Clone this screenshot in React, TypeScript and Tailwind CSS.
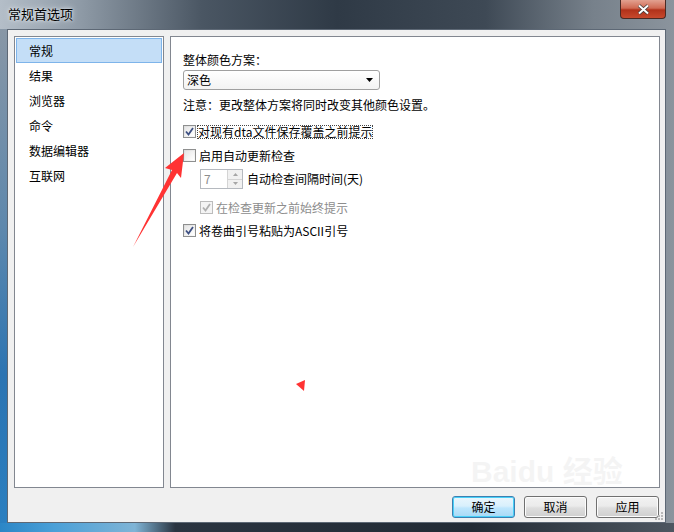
const font = { fontFamily: '"Noto Sans CJK SC", "Microsoft YaHei", sans-serif' }

function Check({ checked, disabled }: { checked?: boolean; disabled?: boolean }) {
	return (
		<span
			className={`size-[13px] shrink-0 border flex items-center justify-center ${disabled ? "border-[#bcbcbc] bg-[#f4f4f4]" : "border-[#8e8f8f] bg-gradient-to-br from-[#dcdcdc] to-[#fbfbfb]"}`}
		>
			<span className={`size-[9px] flex items-center justify-center ${disabled ? "bg-[#f4f4f4]" : "bg-gradient-to-br from-[#e6e6e6] to-[#ffffff]"}`}>
				{checked && (
					<svg width="9" height="9" viewBox="0 0 9 9">
						<path d="M1 4.5 L3.5 7.5 L8 1" fill="none" stroke={disabled ? "#b0b0b0" : "#3d4f82"} strokeWidth="1.8" />
					</svg>
				)}
			</span>
		</span>
	)
}

const nav = ["常规", "结果", "浏览器", "命令", "数据编辑器", "互联网"]

export default function App() {
	return (
		<div style={font} className="relative w-[674px] h-[532px] overflow-hidden flex flex-col text-[12px] text-black bg-[linear-gradient(90deg,#b4bec8_0%,#8e9aa6_12%,#4a5663_30%,#2f3a46_50%,#3e4955_72%,#77818b_88%,#8b949d_100%)]">
			{/* title bar */}
			<div className="h-[29px] shrink-0 flex items-start justify-between pl-[8px] pr-[8px]">
				<span className="mt-[6px] text-[13px] leading-[16px] text-black [text-shadow:0_0_6px_#e8edf2,0_0_3px_#e8edf2]">常规首选项</span>
				<div className="w-[46px] h-[19px] rounded-b-[4px] border border-t-0 border-[#4a2a24] bg-[linear-gradient(#e2a190_0%,#d06a53_45%,#b1321a_55%,#c7492d_100%)] flex items-center justify-center">
					<svg width="13" height="11" viewBox="0 0 13 11">
						<path d="M2 1.5 L11 9.5 M11 1.5 L2 9.5" stroke="#3a3a3a" strokeWidth="3.4" />
						<path d="M2 1.5 L11 9.5 M11 1.5 L2 9.5" stroke="#ffffff" strokeWidth="2" />
					</svg>
				</div>
			</div>

			{/* body */}
			<div className="flex-1 flex">
				<div className="w-[7px] shrink-0 bg-[linear-gradient(#8897a6_0%,#5e88ad_40%,#2c74b2_70%,#2a7fc0_100%)]" />
				<div className="relative w-[659px] h-[494px] border border-[#5d6875] bg-[#f0f0f0] flex flex-col pl-[6px] pr-[5px] pt-[6px]">
					<div className="flex gap-[6px] h-[452px]">
						{/* left list */}
						<div className="w-[150px] h-full border border-[#828790] bg-white p-[1px] flex flex-col">
							{nav.map((n, i) => (
								<div
									key={n}
									className={`h-[25px] pl-[12px] flex items-center leading-none ${i === 0 ? "border border-[#7eb4ea] bg-[#c4def7]" : "border border-transparent"}`}
								>
									{n}
								</div>
							))}
						</div>

						{/* right panel */}
						<div className="relative flex-1 h-full border border-[#828790] bg-white pl-[12px] pt-[15px] flex flex-col">
							<div className="leading-[16px]">整体颜色方案：</div>
							<div className="mt-[2px] w-[197px] h-[20px] rounded-[3px] border border-[#a0a0a0] bg-[linear-gradient(#ffffff,#f3f3f3)] flex items-center justify-between pl-[3px] pr-[6px]">
								<span className="leading-none">深色</span>
								<svg width="7" height="4" viewBox="0 0 7 4">
									<path d="M0 0 H7 L3.5 4 Z" fill="#000" />
								</svg>
							</div>
							<div className="mt-[7px] leading-[16px]">注意：更改整体方案将同时改变其他颜色设置。</div>

							<div className="mt-[10px] flex items-center gap-[1px] h-[17px]">
								<Check checked />
								<span className="leading-[14px] px-[1px] outline-1 outline-dotted outline-[#444] -outline-offset-1">对现有dta文件保存覆盖之前提示</span>
							</div>
							<div className="mt-[7px] flex items-center gap-[3px] h-[17px]">
								<Check />
								<span className="leading-none">启用自动更新检查</span>
							</div>

							<div className="mt-[5px] ml-[17px] flex items-center gap-[4px] h-[20px]">
								<div className="w-[43px] h-[20px] border border-[#b5b9bf] bg-white flex items-center justify-between">
									<span className="pl-[3px] text-[#8d8d8d] leading-none">7</span>
									<div className="w-[15px] h-full flex flex-col border-l border-[#d4d4d4]">
										<div className="flex-1 bg-[#f1f1f1] border-b border-[#d4d4d4] flex items-center justify-center">
											<svg width="5" height="3" viewBox="0 0 5 3"><path d="M0 3 L2.5 0 L5 3 Z" fill="#a6a6a6" /></svg>
										</div>
										<div className="flex-1 bg-[#f1f1f1] flex items-center justify-center">
											<svg width="5" height="3" viewBox="0 0 5 3"><path d="M0 0 L2.5 3 L5 0 Z" fill="#a6a6a6" /></svg>
										</div>
									</div>
								</div>
								<span className="leading-none">自动检查间隔时间(天)</span>
							</div>

							<div className="mt-[10px] ml-[17px] flex items-center gap-[3px] h-[17px] text-[#8d8d8d]">
								<Check checked disabled />
								<span className="leading-none">在检查更新之前始终提示</span>
							</div>
							<div className="mt-[6px] flex items-center gap-[3px] h-[17px]">
								<Check checked />
								<span className="leading-none">将卷曲引号粘贴为ASCII引号</span>
							</div>

							{/* faint watermark */}
							<div className="absolute left-[300px] top-[420px] text-[30px] leading-none font-bold text-black opacity-[0.04] pointer-events-none" style={{ fontFamily: '"Liberation Sans", "Noto Sans CJK SC", sans-serif' }}>Baidu 经验</div>
						</div>
					</div>

					{/* buttons */}
					<div className="mt-[8px] flex justify-end gap-[9px] pr-[1px]">
						<button className="w-[63px] h-[22px] rounded-[3px] border border-[#3c7fb1] bg-[linear-gradient(#eaf6fd_0%,#d9f0fc_45%,#bee6fd_55%,#a7d9f5_100%)] shadow-[inset_0_0_0_1px_#48d0f8] leading-none">确定</button>
						<button className="w-[63px] h-[22px] rounded-[3px] border border-[#707070] bg-[linear-gradient(#f2f2f2_0%,#ebebeb_45%,#dddddd_55%,#cfcfcf_100%)] shadow-[inset_0_0_0_1px_#fcfcfc] leading-none">取消</button>
						<button className="w-[63px] h-[22px] rounded-[3px] border border-[#707070] bg-[linear-gradient(#f2f2f2_0%,#ebebeb_45%,#dddddd_55%,#cfcfcf_100%)] shadow-[inset_0_0_0_1px_#fcfcfc] leading-none">应用</button>
					</div>

					{/* resize grip */}
					<svg className="absolute right-[1px] bottom-[1px]" width="10" height="10" viewBox="0 0 10 10">
						<g fill="#b8b8b8">
							<rect x="7" y="1" width="2" height="2" />
							<rect x="4" y="4" width="2" height="2" />
							<rect x="7" y="4" width="2" height="2" />
							<rect x="1" y="7" width="2" height="2" />
							<rect x="4" y="7" width="2" height="2" />
							<rect x="7" y="7" width="2" height="2" />
						</g>
					</svg>
				</div>
				<div className="flex-1" />
			</div>
			<div className="h-[9px] shrink-0 bg-[linear-gradient(90deg,#2b86c6_0%,#4aa0d8_8%,#7fb4d6_20%,#2a3440_26%,#222b35_70%,#4d5660_100%)]" />

			{/* annotations */}
			<svg className="absolute left-0 top-0 pointer-events-none" width="674" height="532">
				<polygon points="184,153 165,168 172,170 133,247 177,173 181,178" fill="#ff3333" />
				<polygon points="296,384 305,380 304,391" fill="#ff3333" />
			</svg>
		</div>
	)
}
